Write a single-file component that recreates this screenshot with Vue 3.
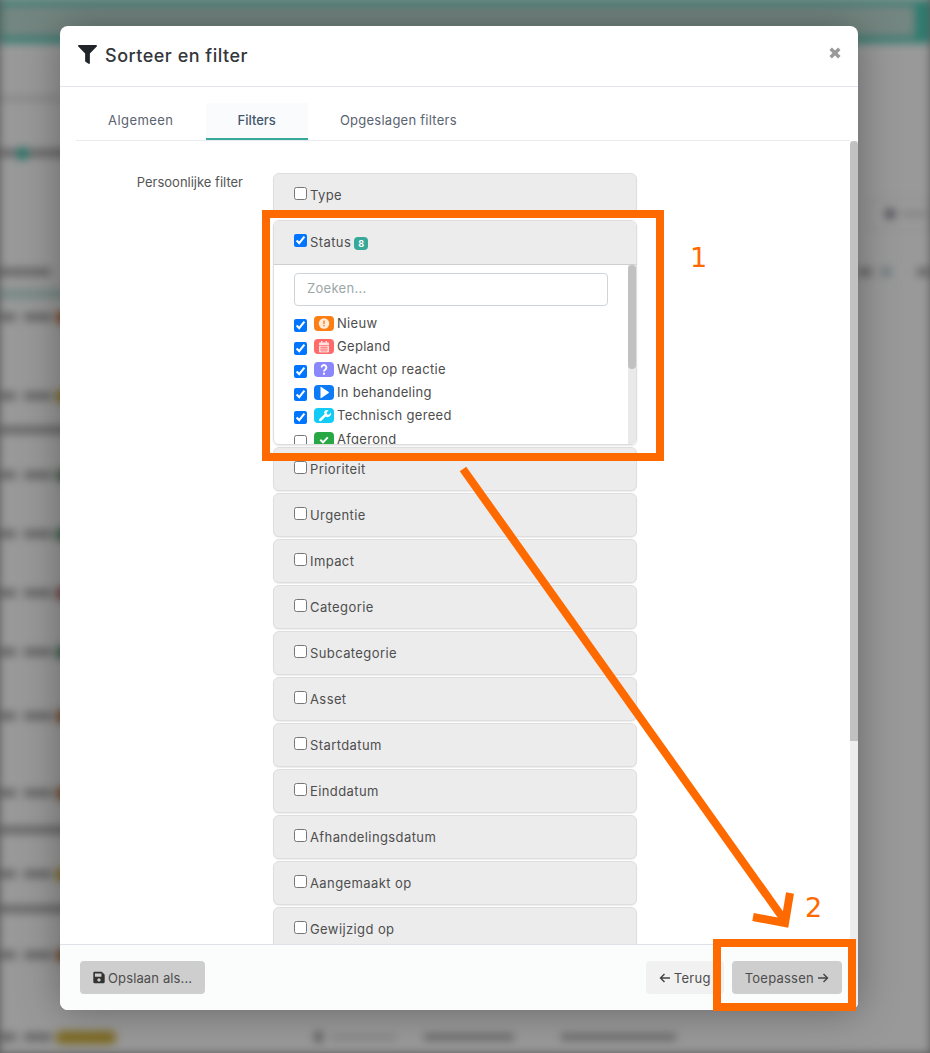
<script setup>
const bgRows = [
  { kind: 'faint', top: 53 },
  { kind: 'dot', top: 48 },
  { kind: 'side', top: 53 },
  { kind: 'head', top: 50 },
  { kind: 'pale', top: 13 },
  { kind: 'row', top: 14, color: '#cf7a4a' },
  { kind: 'row', top: 71, color: '#d2b23a' },
  { kind: 'plain', top: 26 },
  { kind: 'row', top: 37, color: '#7f9a80' },
  { kind: 'row', top: 51, color: '#5f9a78' },
  { kind: 'row', top: 51, color: '#b0706a' },
  { kind: 'row', top: 51, color: '#5f9a78' },
  { kind: 'row', top: 56, color: '#b87a4e' },
  { kind: 'row', top: 69, color: '#b87a4e' },
  { kind: 'plain', top: 29 },
  { kind: 'row', top: 36, color: '#d2b23a' },
  { kind: 'plain', top: 27 },
  { kind: 'row', top: 38, color: '#b87a4e' },
  { kind: 'last', top: 74, color: '#d2b23a' }
]
const statuses = [
  { label: 'Nieuw', color: '#fd7e14', checked: true, icon: 'alert' },
  { label: 'Gepland', color: '#ff6b6b', checked: true, icon: 'cal' },
  { label: 'Wacht op reactie', color: '#8987fb', checked: true, icon: 'q' },
  { label: 'In behandeling', color: '#0d7bf5', checked: true, icon: 'play' },
  { label: 'Technisch gereed', color: '#12cbf6', checked: true, icon: 'wrench' },
  { label: 'Afgerond', color: '#28a745', checked: false, icon: 'check' }
]
const before = ['Type']
const after = ['Prioriteit', 'Urgentie', 'Impact', 'Categorie', 'Subcategorie', 'Asset', 'Startdatum', 'Einddatum', 'Afhandelingsdatum', 'Aangemaakt op', 'Gewijzigd op']
</script>

<template>
  <div class="page">
    <div class="bg">
      <div class="bg-top"><div class="bg-search"></div></div>
      <div v-for="(r, i) in bgRows" :key="i" class="bg-row" :class="'k-' + r.kind" :style="{ marginTop: r.top + 'px' }">
        <template v-if="r.kind === 'row' || r.kind === 'last'">
          <span class="seg s1"></span><span class="seg s2"></span><span class="bg-tag" :style="{ background: r.color }"></span>
        </template>
        <template v-if="r.kind === 'last'">
          <span class="ft-dot"></span><span class="ft-a"></span><span class="ft-b"></span><span class="ft-c"></span>
        </template>
        <template v-if="r.kind === 'dot'">
          <span class="seg d1"></span><span class="bg-dot"></span><span class="seg d2"></span>
        </template>
        <template v-if="r.kind === 'side'">
          <span class="side-btn"><span class="side-dot"></span><span class="side-txt"></span></span>
        </template>
        <template v-if="r.kind === 'head'">
          <span class="seg h1"></span><span class="seg h2"></span><span class="h3"></span><span class="seg h4"></span>
        </template>
      </div>
    </div>
    <div class="backdrop"></div>

    <section class="modal">
      <header class="m-head">
        <svg class="funnel" viewBox="0 0 512 512"><path d="M487.976 0H24.028C2.71 0-8.047 25.866 7.058 40.971L192 225.941V432c0 7.831 3.821 15.17 10.237 19.662l80 55.98C298.02 518.69 320 507.493 320 487.98V225.941l184.947-184.97C520.021 25.896 509.338 0 487.976 0z"/></svg>
        <h1>Sorteer en filter</h1>
        <svg class="close" viewBox="0 0 12 12"><path d="M2.3 2.3l7.4 7.4M9.7 2.3l-7.4 7.4"/></svg>
      </header>
      <nav class="tabs">
        <span class="tab">Algemeen</span>
        <span class="tab active">Filters</span>
        <span class="tab">Opgeslagen filters</span>
      </nav>
      <div class="content">
        <label class="side-label">Persoonlijke filter</label>
        <div class="accordion">
          <div v-for="t in before" :key="t" class="acc"><input type="checkbox" tabindex="-1"><span>{{ t }}</span></div>
          <div class="acc-open">
            <div class="acc acc-status"><input type="checkbox" checked tabindex="-1"><span>Status</span><b class="badge">8</b></div>
            <div class="acc-body">
              <div class="list">
                <div class="search">Zoeken...</div>
                <div v-for="s in statuses" :key="s.label" class="item">
                  <input type="checkbox" :checked="s.checked" tabindex="-1">
                  <span class="ico" :style="{ background: s.color }">
                    <svg viewBox="0 0 20 15">
                      <template v-if="s.icon === 'alert'"><circle cx="10" cy="7.500" r="5.200" fill="#fff" opacity=".85"/><rect x="9.300" y="4.500" width="1.400" height="3.600" :fill="s.color"/><rect x="9.300" y="9" width="1.400" height="1.400" :fill="s.color"/></template>
                      <template v-if="s.icon === 'cal'"><path fill="#fff" opacity=".8" d="M6 3.500h1V2h1.400v1.500h3.200V2H13v1.500h1a1 1 0 0 1 1 1v8a1 1 0 0 1-1 1H6a1 1 0 0 1-1-1v-8a1 1 0 0 1 1-1z"/><path :stroke="s.color" stroke-width=".7" d="M5 6.500h10M6 8.700h8M6 10.900h8M8 6.500v7M10 6.500v7M12 6.500v7"/></template>
                      <template v-if="s.icon === 'q'"><path fill="none" stroke="#fff" stroke-width="1.900" d="M7.600 5.500a2.400 2.400 0 1 1 3.700 2c-.9.600-1.300 1-1.300 2"/><rect x="9" y="10.700" width="2" height="2" fill="#fff"/></template>
                      <template v-if="s.icon === 'play'"><path fill="#fff" d="M6.500 2.300v10.400a.5.5 0 0 0 .8.4l7.400-5.200a.5.5 0 0 0 0-.8L7.300 1.900a.5.5 0 0 0-.8.4z"/></template>
                      <template v-if="s.icon === 'wrench'"><path fill="none" stroke="#fff" stroke-width="2.500" stroke-linecap="round" d="M6.300 12l5.200-5.200"/><path fill="#fff" d="M10 4.200A3.600 3.600 0 0 1 14.700 2.300l-2.100 2.100.4 1.900 1.900.4 2.100-2.100a3.600 3.600 0 0 1-5.200 4.100z"/></template>
                      <template v-if="s.icon === 'check'"><path fill="none" stroke="#fff" stroke-width="2" d="M6.300 7.700l2.700 2.700 4.800-5"/></template>
                    </svg>
                  </span>
                  <span class="item-label">{{ s.label }}</span>
                </div>
              </div>
              <div class="inner-track"><div class="inner-thumb"></div></div>
            </div>
          </div>
          <div v-for="t in after" :key="t" class="acc"><input type="checkbox" tabindex="-1"><span>{{ t }}</span></div>
        </div>
      </div>
      <footer class="m-foot">
        <button class="btn solid">
          <svg class="save" viewBox="0 0 448 512"><path d="M433.900 129.900l-83.900-83.900A48 48 0 0 0 316.100 32H48C21.500 32 0 53.500 0 80v352c0 26.500 21.500 48 48 48h352c26.500 0 48-21.500 48-48V163.900a48 48 0 0 0-14.100-34zM224 416c-35.300 0-64-28.700-64-64 0-35.300 28.700-64 64-64s64 28.700 64 64c0 35.300-28.700 64-64 64zm96-304.500V212c0 6.600-5.400 12-12 12H76c-6.600 0-12-5.400-12-12V108c0-6.600 5.400-12 12-12h228.500c3.200 0 6.200 1.300 8.500 3.500l3.500 3.500c2.200 2.300 3.500 5.300 3.500 8.500z"/></svg>
          <span>Opslaan als...</span>
        </button>
        <div class="foot-right">
          <button class="btn light">
            <svg class="arrow" viewBox="0 0 12 12"><path d="M11 6H1.500M5.500 2L1.500 6l4 4"/></svg>
            <span>Terug</span>
          </button>
          <button class="btn solid">
            <span>Toepassen</span>
            <svg class="arrow" viewBox="0 0 12 12"><path d="M1 6h9.500M6.500 2l4 4-4 4"/></svg>
          </button>
        </div>
      </footer>
      <div class="track"><div class="thumb"></div></div>
    </section>

    <div class="anno box-1"></div>
    <div class="anno box-2"></div>
    <span class="num num-1">1</span>
    <span class="num num-2">2</span>
    <svg class="anno-arrow" width="930" height="1053" viewBox="0 0 930 1053">
      <path d="M463 469 L785 921" />
      <path d="M753 917 L785 923 L790 893" />
    </svg>
  </div>
</template>

<style>
html, body { margin: 0; padding: 0; background: #999; }
</style>

<style scoped>
.page { position: relative; width: 930px; height: 1053px; overflow: hidden; font-family: Inter, "Noto Sans", sans-serif; color: #4a4a4a; }

.bg { position: absolute; inset: -10px 0 0 0; padding-top: 10px; background: #fff; filter: blur(4px); overflow: hidden; }
.bg-top { height: 43px; background: #4dccb8; padding: 5px 15px 0 0; box-sizing: border-box; }
.bg-search { height: 32px; background: #c2dfd8; margin-left: 2px; }
.bg-row { height: 8px; display: flex; align-items: center; position: relative; }
.seg { height: 8px; background: #ababab; flex: none; }
.s1 { width: 16px; }
.s2 { width: 28px; margin-left: 8px; }
.bg-tag { width: 60px; height: 13px; border-radius: 5px; margin-left: 4px; flex: none; }
.k-faint { height: 5px; width: 60px; background: #dedede; }
.d1 { width: 16px; }
.bg-dot { width: 13px; height: 13px; border-radius: 50%; background: #3fc0aa; flex: none; }
.d2 { width: 40px; }
.k-side { justify-content: flex-end; }
.side-btn { width: 58px; height: 30px; border: 1px solid #e2e2e2; border-radius: 4px; display: flex; align-items: center; flex: none; }
.side-dot { width: 10px; height: 10px; border-radius: 50%; background: #778; margin-left: 14px; }
.side-txt { width: 26px; height: 4px; background: #ccc; margin-left: 6px; }
.h1 { width: 50px; }
.h2 { width: 14px; margin-left: 808px; }
.h3 { width: 12px; height: 10px; border-radius: 50%; background: #bdd0d8; margin-left: 8px; }
.h4 { width: 13px; margin-left: 25px; }
.k-pale { background: #c9e6e0; width: 70px; height: 10px; }
.k-plain { width: 70px; background: #ababab; }
.ft-dot { width: 9px; height: 12px; border-radius: 50%; background: #9a9a9a; margin-left: 198px; flex: none; }
.ft-a { width: 65px; height: 3px; background: #c0c0c0; margin-left: 8px; flex: none; }
.ft-b { width: 90px; height: 6px; background: #a5a5a5; margin-left: 28px; flex: none; }
.ft-c { width: 115px; height: 6px; background: #a5a5a5; margin-left: 47px; flex: none; }
.backdrop { position: absolute; inset: 0; background: rgba(0, 0, 0, .4); }

.modal { position: absolute; left: 60px; top: 26px; width: 798px; height: 984px; background: #fff; border-radius: 8px; overflow: hidden; display: flex; flex-direction: column; box-shadow: 0 0 40px rgba(0, 0, 0, .35); }
.m-head { height: 61px; box-sizing: border-box; flex: none; display: flex; align-items: center; padding: 0 16px 0 18px; border-bottom: 1px solid #e4e4ec; }
.funnel { width: 19px; height: 19px; fill: #212529; margin: -3px 8px 0 0; }
h1 { margin: 0; font-size: 18px; font-weight: 500; color: #33363a; flex: 1; letter-spacing: .5px; line-height: 1; }
.close { width: 14px; height: 14px; fill: none; stroke: #9a9a9a; stroke-width: 3; margin-top: -6px; }

.tabs { flex: none; height: 54px; box-sizing: border-box; margin: 0 8px 0 16px; padding-top: 16px; display: flex; border-bottom: 1px solid #ebebef; }
.tab { box-sizing: border-box; height: 37px; padding: 8px 32px 0; font-size: 13px; line-height: 18px; color: #5a6370; letter-spacing: .25px; }
.tab:first-child { letter-spacing: .45px; }
.tab.active { color: #44566c; background: #fafbfc; border-bottom: 2px solid #36a99a; font-weight: 500; letter-spacing: 0; }

.content { flex: 1; min-height: 0; overflow: hidden; display: flex; align-items: flex-start; padding: 32px 0 0 0; }
.side-label { width: 183px; text-align: right; font-size: 13px; line-height: 18px; flex: none; color: #555; letter-spacing: 0; }
.accordion { margin-left: 30px; width: 364px; flex: none; display: flex; flex-direction: column; gap: 2px; }
.acc { height: 44.100px; flex: none; box-sizing: border-box; background: #ececec; border: 1px solid #dedede; border-radius: 6px; padding: 11px 0 0 20px; display: flex; align-items: flex-start; font-size: 13px; line-height: 20px; color: #4e4e4e; letter-spacing: .4px; box-shadow: 0 1px 1px rgba(0,0,0,.08); }
.acc input { width: 13px; height: 13px; margin: 2px 3px 0 0; flex: none; accent-color: #0075ff; }
.acc-open { height: 225px; flex: none; box-sizing: border-box; border: 1px solid #dedede; border-radius: 6px; overflow: hidden; margin: 1px 0 -.55px; box-shadow: 0 1px 2px rgba(0,0,0,.1); }
.acc-status { height: 44px; border: 0; border-bottom: 1px solid #cfcfcf; border-radius: 0; box-shadow: none; }
.badge { margin: 5px 0 0 3px; width: 14px; height: 13px; border-radius: 4px; background: #38a89a; color: #fff; font-size: 9px; line-height: 13px; text-align: center; font-weight: 700; letter-spacing: 0; }
.acc-body { display: flex; height: 179px; overflow: hidden; }
.list { flex: 1; padding: 8px 20px 0 20px; min-width: 0; }
.search { height: 33px; box-sizing: border-box; border: 1px solid #ced4da; border-radius: 4px; padding: 0 12px; font-size: 13px; line-height: 29px; color: #9aa8a8; letter-spacing: .3px; margin-bottom: 8px; }
.item { height: 23.100px; display: flex; align-items: flex-start; font-size: 13px; line-height: 18px; color: #4d4d4d; letter-spacing: .3px; }
.item input { width: 13px; height: 13px; margin: 5px 7px 0 0; flex: none; accent-color: #0075ff; }
.ico { width: 20px; height: 15px; border-radius: 4px; flex: none; margin: 2px 3px 0 0; display: flex; }
.ico svg { width: 20px; height: 15px; }
.inner-track { width: 8px; flex: none; background: #e9e9e9; }
.inner-thumb { height: 104px; background: #c1c1c1; border-radius: 4px; }

.track { position: absolute; right: 0; top: 115px; bottom: 0; width: 8px; background: #ededed; }
.thumb { height: 600px; background: #c1c1c1; border-radius: 4px 4px 0 0; }

.m-foot { flex: none; height: 66px; box-sizing: border-box; background: #fbfcfc; border-top: 1px solid #dfe2ea; display: flex; align-items: center; justify-content: space-between; padding: 0 16px 0 20px; }
.foot-right { display: flex; gap: 8px; }
.btn { height: 33px; border: 0; border-radius: 4px; padding: 0 13px; display: flex; align-items: center; gap: 3px; font-family: inherit; font-size: 13px; color: #4d4d4d; letter-spacing: .13px; }
.foot-right .btn { letter-spacing: .25px; }
.btn.solid { background: #cecece; }
.btn.light { background: #f1f1f1; }
.save { width: 12px; height: 13px; fill: #333; }
.arrow { width: 12px; height: 12px; fill: none; stroke: #444; stroke-width: 1.400; }

.anno { position: absolute; border: 8px solid #ff6a00; box-sizing: border-box; }
.box-1 { left: 262px; top: 210px; width: 402px; height: 251px; }
.box-2 { left: 713px; top: 939px; width: 143px; height: 72px; }
.num { position: absolute; font-family: "DejaVu Sans", sans-serif; color: #ff6a00; font-size: 27px; line-height: 30px; }
.num-1 { left: 690px; top: 243px; }
.num-2 { left: 805px; top: 893px; }
.anno-arrow { position: absolute; left: 0; top: 0; pointer-events: none; }
.anno-arrow path { fill: none; stroke: #ff6a00; stroke-width: 8; }
</style>
